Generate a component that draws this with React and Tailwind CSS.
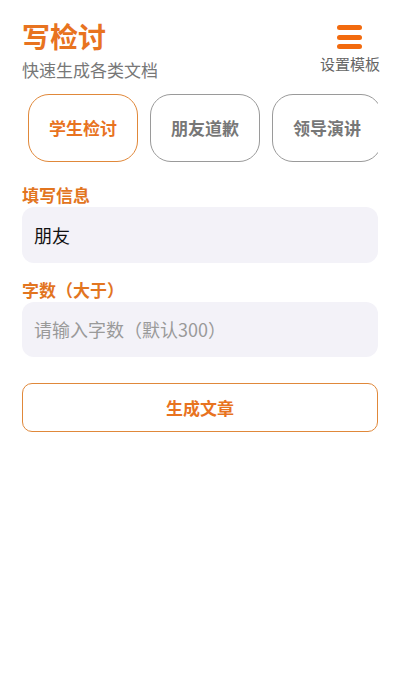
const tabs = ['学生检讨', '朋友道歉', '领导演讲']

export default function App() {
  const font = { fontFamily: '"Noto Sans CJK SC", "Noto Sans", sans-serif' }
  return (
    <div className="w-[400px] h-[700px] bg-white overflow-hidden" style={font}>
      <div className="flex justify-between px-[22px]">
        <div className="pt-[18px]">
          <h1 className="h-[36px] leading-[36px] text-[28px] font-bold text-[#e8731f]">写检讨</h1>
          <p className="mt-[4px] h-[24px] leading-[24px] text-[17px] text-[#777]">快速生成各类文档</p>
        </div>
        <div className="flex flex-col items-center pt-[25px] -mr-[2px]">
          <div className="flex flex-col gap-[4.5px]">
            <span className="block w-[25px] h-[5px] rounded-full bg-[#f26a0e]" />
            <span className="block w-[25px] h-[5px] rounded-full bg-[#f26a0e]" />
            <span className="block w-[25px] h-[5px] rounded-full bg-[#f26a0e]" />
          </div>
          <span className="mt-[5px] text-[15px] leading-[20px] text-[#666]">设置模板</span>
        </div>
      </div>

      <div className="mx-[22px] mt-[12px] overflow-hidden">
        <div className="flex gap-[12px] pl-[6px]">
          {tabs.map((t, i) => (
            <div
              key={t}
              className={
                i === 0
                  ? 'shrink-0 w-[110px] h-[68px] rounded-[21px] border-[1.5px] border-[#e0883a] flex items-center justify-center text-[17px] font-bold text-[#e8731f]'
                  : 'shrink-0 w-[110px] h-[68px] rounded-[21px] border-[1.5px] border-[#9a9a9a] flex items-center justify-center text-[17px] font-bold text-[#777]'
              }
            >
              {t}
            </div>
          ))}
        </div>
      </div>

      <div className="px-[22px]">
        <p className="mt-[21px] h-[24px] leading-[24px] text-[17px] font-bold text-[#e2751f]">填写信息</p>
        <div className="h-[56px] rounded-[12px] bg-[#f3f2f8] flex items-center px-[12px] text-[18px] text-[#111]">朋友</div>

        <p className="mt-[15px] h-[24px] leading-[24px] text-[17px] font-bold text-[#e2751f]">字数（大于）</p>
        <div className="h-[55px] rounded-[12px] bg-[#f3f2f8] flex items-center px-[12px] text-[18px] text-[#9a9a9a]">请输入字数（默认300）</div>

        <button className="mt-[26px] w-full h-[49px] rounded-[10px] border-[1.5px] border-[#e0883a] bg-white text-[17px] font-bold text-[#e8731f]">
          生成文章
        </button>
      </div>
    </div>
  )
}
